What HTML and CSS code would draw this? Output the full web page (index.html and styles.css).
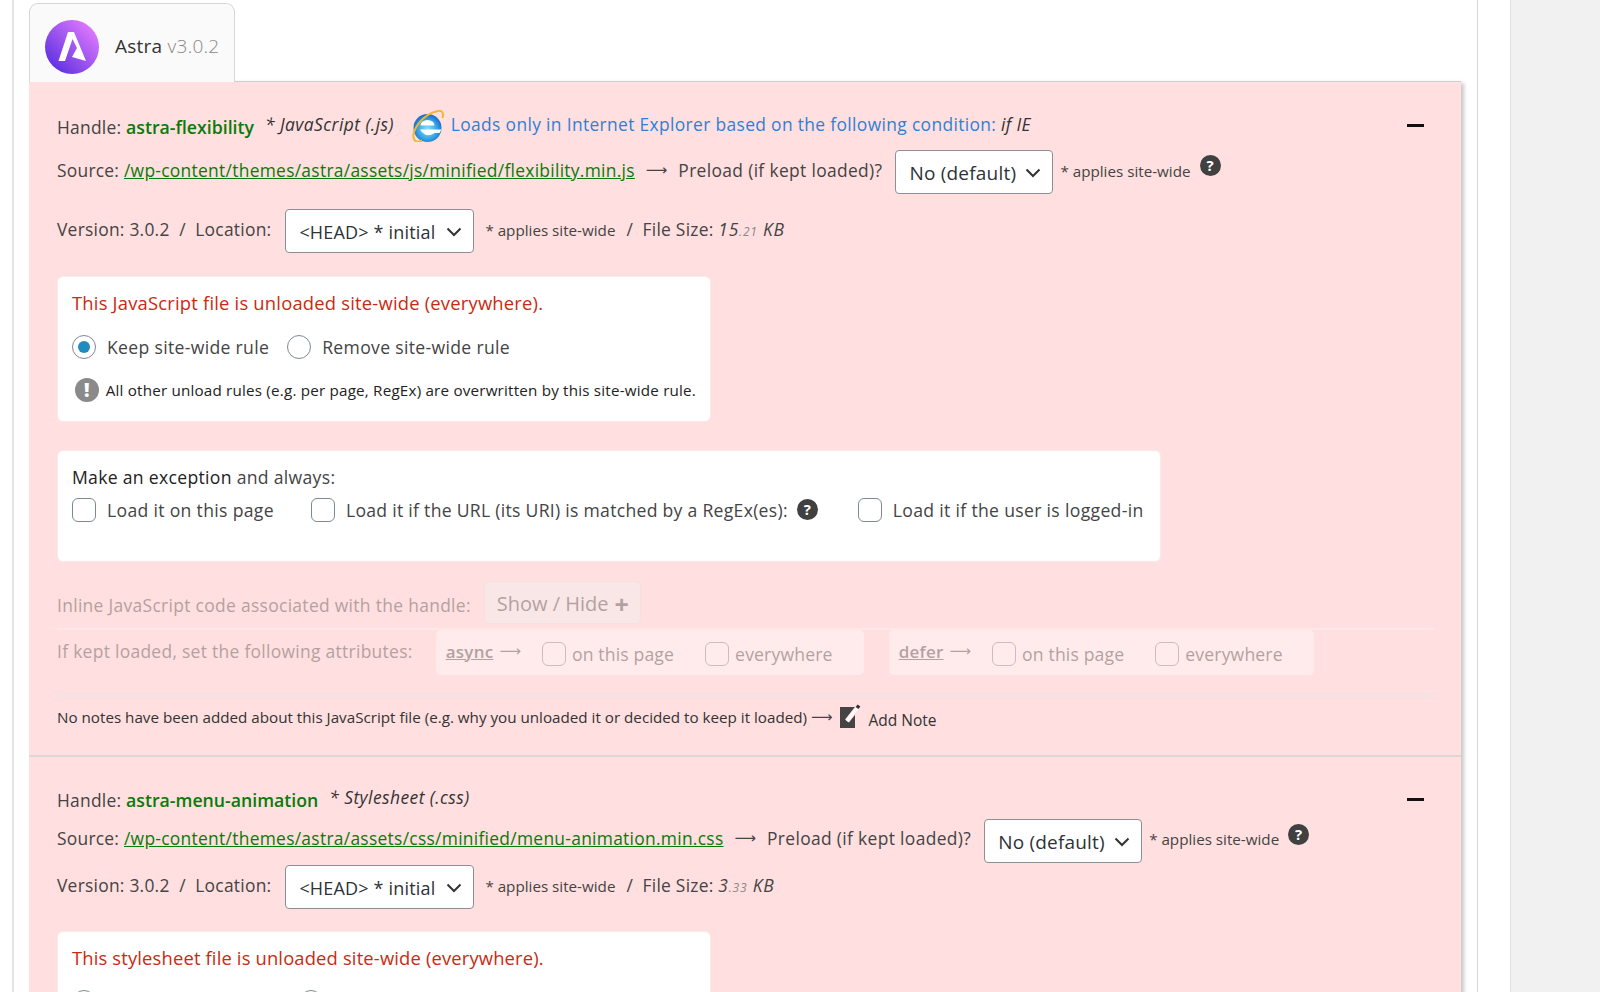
FILE: index.html
```html
<!DOCTYPE html>
<html lang="en">
<head>
  <meta charset="UTF-8">
  <meta name="viewport" content="width=device-width, initial-scale=1.0">
  <title>Asset CleanUp</title>
  <link rel="stylesheet" href="styles.css">
</head>
<body>
  <div class="page">
    <div class="panel">

      <!-- Theme tab -->
      <div class="tab">
        <svg class="logo" width="54" height="54" viewBox="0 0 54 54">
          <defs>
            <linearGradient id="astra-grad" x1="0.1" y1="0.9" x2="0.9" y2="0.1">
              <stop offset="0" stop-color="#5a2fe0"/>
              <stop offset="1" stop-color="#e37bff"/>
            </linearGradient>
          </defs>
          <circle cx="27" cy="27" r="27" fill="url(#astra-grad)"/>
          <path d="M23 12H29L41 41L27 37L32 28L27.5 19L20 41H13.5Z" fill="#fff"/>
        </svg>
        <span class="tab-name">Astra <span class="tab-version">v3.0.2</span></span>
      </div>

      <div class="assets">

        <!-- First asset -->
        <div class="asset">
          <div class="row row-handle">
            <span>Handle: <strong class="handle">astra-flexibility</strong></span>
            <em class="asset-type type-js">* JavaScript (.js)</em>
            <svg class="ie-icon" width="32" height="32" viewBox="0 0 32 32">
              <defs>
                <radialGradient id="ie-grad" cx="0.5" cy="0.55" r="0.55">
                  <stop offset="0" stop-color="#8fe0f8"/>
                  <stop offset="0.6" stop-color="#38a8e8"/>
                  <stop offset="1" stop-color="#1767c8"/>
                </radialGradient>
              </defs>
              <circle cx="15.5" cy="18" r="14" fill="url(#ie-grad)"/>
              <path d="M8.5 15.5a7 5.5 0 0 1 14 0Z" fill="#fff"/>
              <path d="M8 19.5H29.5L27.5 23H22.5Q15 28 9.5 21.5Z" fill="#fff"/>
              <path d="M2.5 30C-2 22 10 4 26 1C30 0 32 3 30.5 8M2.5 30C4 32 7 32 10 30.5" fill="none" stroke="#f3b52c" stroke-width="2"/>
            </svg>
            <span class="ie-note">Loads only in Internet Explorer based on the following condition: <em>if IE</em></span>
            <span class="minus"></span>
          </div>

          <div class="row row-source">
            <span class="lift-4">Source: <a class="src-link" href="#">/wp-content/themes/astra/assets/js/minified/flexibility.min.js</a></span>
            <span class="arrow lift-4">&#10230;</span>
            <span class="lift-4 preload-label">Preload (if kept loaded)?</span>
            <div class="select select-preload">No (default)
              <svg width="16" height="10" viewBox="0 0 16 10"><path d="M1.5 1.5L8 8L14.5 1.5" fill="none" stroke="#333" stroke-width="2"/></svg>
            </div>
            <span class="small lift-2">* applies site-wide</span>
            <span class="help">?</span>
          </div>

          <div class="row row-version">
            <span class="lift-4">Version: 3.0.2 &nbsp;/&nbsp; Location:</span>
            <div class="select select-location">&lt;HEAD&gt; * initial
              <svg width="16" height="10" viewBox="0 0 16 10"><path d="M1.5 1.5L8 8L14.5 1.5" fill="none" stroke="#333" stroke-width="2"/></svg>
            </div>
            <span class="small small-loc lift-2">* applies site-wide</span>
            <span class="file-size lift-4">/ &nbsp;File Size: <em>15<small>.21</small> KB</em></span>
          </div>

          <div class="card card-rule">
            <div class="unloaded">This JavaScript file is unloaded site-wide (everywhere).</div>
            <div class="choices">
              <label class="choice"><input type="radio" name="rule1" checked> Keep site-wide rule</label>
              <label class="choice"><input type="radio" name="rule1"> Remove site-wide rule</label>
            </div>
            <div class="warning"><span class="warn-icon">!</span> All other unload rules (e.g. per page, RegEx) are overwritten by this site-wide rule.</div>
          </div>

          <div class="card card-exception">
            <div class="exception-title"><strong>Make an exception</strong> and always:</div>
            <div class="exceptions">
              <label class="choice"><input type="checkbox"> Load it on this page</label>
              <label class="choice choice-regex"><input type="checkbox"> Load it if the URL (its URI) is matched by a RegEx(es):</label>
              <span class="help help-regex">?</span>
              <label class="choice choice-logged"><input type="checkbox"> Load it if the user is logged-in</label>
            </div>
          </div>

          <div class="disabled-wrap">
            <div class="row row-inline">
              <span class="inline-label">Inline JavaScript code associated with the handle:</span>
              <span class="show-hide">Show / Hide <b>+</b></span>
            </div>
            <div class="row row-attrs">
              <span class="attrs-label">If kept loaded, set the following attributes:</span>
              <div class="attr attr-async">
                <u>async</u> <span class="arrow arrow-attr">&#10230;</span>
                <label class="attr-opt"><input type="checkbox"> on this page</label>
                <label class="attr-opt"><input type="checkbox"> everywhere</label>
              </div>
              <div class="attr attr-defer">
                <u>defer</u> <span class="arrow arrow-attr">&#10230;</span>
                <label class="attr-opt"><input type="checkbox"> on this page</label>
                <label class="attr-opt"><input type="checkbox"> everywhere</label>
              </div>
            </div>
          </div>

          <div class="row row-notes">
            <span>No notes have been added about this JavaScript file (e.g. why you unloaded it or decided to keep it loaded)</span>
            <span class="arrow arrow-note">&#10230;</span>
            <svg class="note-icon" width="24" height="25" viewBox="0 0 24 25">
              <rect x="1" y="3" width="15" height="21" fill="#444"/>
              <path d="M8 17L19 3" stroke="#ffdfdf" stroke-width="5"/>
              <path d="M8 17L19 3" stroke="#fff" stroke-width="3"/>
              <path d="M18 4L20 1.5" stroke="#333" stroke-width="3.5"/>
            </svg>
            <span class="add-note">Add Note</span>
          </div>
        </div>

        <!-- Second asset -->
        <div class="asset asset-second">
          <div class="row row-handle-2">
            <span>Handle: <strong class="handle">astra-menu-animation</strong></span>
            <em class="asset-type type-css">* Stylesheet (.css)</em>
            <span class="minus"></span>
          </div>

          <div class="row row-source-2">
            <span class="lift-6">Source: <a class="src-link" href="#">/wp-content/themes/astra/assets/css/minified/menu-animation.min.css</a></span>
            <span class="arrow lift-6">&#10230;</span>
            <span class="lift-6 preload-label">Preload (if kept loaded)?</span>
            <div class="select select-preload">No (default)
              <svg width="16" height="10" viewBox="0 0 16 10"><path d="M1.5 1.5L8 8L14.5 1.5" fill="none" stroke="#333" stroke-width="2"/></svg>
            </div>
            <span class="small lift-4">* applies site-wide</span>
            <span class="help">?</span>
          </div>

          <div class="row row-version-2">
            <span class="lift-4">Version: 3.0.2 &nbsp;/&nbsp; Location:</span>
            <div class="select select-location">&lt;HEAD&gt; * initial
              <svg width="16" height="10" viewBox="0 0 16 10"><path d="M1.5 1.5L8 8L14.5 1.5" fill="none" stroke="#333" stroke-width="2"/></svg>
            </div>
            <span class="small small-loc lift-2">* applies site-wide</span>
            <span class="file-size lift-4">/ &nbsp;File Size: <em>3<small>.33</small> KB</em></span>
          </div>

          <div class="card card-rule">
            <div class="unloaded unloaded-css">This stylesheet file is unloaded site-wide (everywhere).</div>
            <div class="choices choices-peek">
              <input type="radio" name="rule2" checked>
              <input type="radio" name="rule2">
            </div>
          </div>
        </div>

      </div>
    </div>
    <div class="sidebar"></div>
  </div>
</body>
</html>
```

FILE: styles.css
```css
/* General Styles */
html, body {
  margin: 0;
  padding: 0;
  height: 100%;
  overflow: hidden;
}

body {
  font-family: 'Open Sans', 'Noto Sans', sans-serif;
  font-size: 17.4px;
  letter-spacing: 0.25px;
  color: #444;
  background: #fff;
}

.page {
  display: flex;
  height: 992px;
  overflow: hidden;
}

.panel {
  box-sizing: border-box;
  width: 1466px;
  margin-left: 12px;
  padding: 3px 16px 0 15px;
  border-left: 2px solid #e4e4e4;
  border-right: 1px solid #d8d8d8;
  background: #fff;
}

.sidebar {
  width: 90px;
  margin-left: 32px;
  border-left: 1px solid #dedede;
  background: #f1f1f1;
}

/* Tab */
.tab {
  box-sizing: border-box;
  display: flex;
  align-items: center;
  position: relative;
  z-index: 1;
  width: 206px;
  height: 79px;
  margin-bottom: -1px;
  padding: 8px 0 0 15px;
  background: #fafafa;
  border: 1px solid #d6d6d6;
  border-bottom: 0;
  border-radius: 9px 9px 0 0;
}

.tab-name {
  margin-left: 16px;
  margin-bottom: 2px;
  font-size: 19px;
  letter-spacing: 0.25px;
  color: #333;
}

.tab-version {
  color: #888;
  font-weight: 300;
}

/* Asset box */
.assets {
  border-top: 1px solid #cfcfcf;
  background: #ffdfdf;
  box-shadow: 3px 2px 4px #c8c8c8;
  height: 1000px;
}

.asset {
  padding: 27px 27px 0 28px;
}

.asset-second {
  padding-top: 25px;
  border-top: 2px solid #dcd6d6;
}

.row {
  display: flex;
  align-items: center;
  white-space: nowrap;
}

.lift-2 {
  margin-bottom: 2px;
}

.lift-4 {
  margin-bottom: 4px;
}

.lift-6 {
  margin-bottom: 6px;
}

.row-handle {
  height: 36px;
}

.row-source {
  height: 46px;
  margin-top: 4px;
}

.row-version {
  height: 48px;
  margin-top: 12px;
}

.row-handle-2 {
  height: 36px;
}

.row-handle-2 .minus {
  margin-bottom: 2px;
}

.row-source-2 {
  height: 46px;
}

.row-version-2 {
  height: 46px;
}

.handle {
  font-weight: 600;
  font-size: 17.7px;
  letter-spacing: 0;
  color: #0a7a0a;
}

.asset-type {
  margin-bottom: 6px;
  letter-spacing: 0.45px;
  color: #333;
}

.type-js {
  margin-left: 11px;
}

.type-css {
  margin-left: 11px;
}

.ie-icon {
  margin-left: 18px;
  margin-bottom: 2px;
}

.ie-note {
  margin-left: 7px;
  margin-bottom: 6px;
  letter-spacing: 0.35px;
  color: #2f7fd6;
}

.ie-note em {
  color: #333;
}

.minus {
  width: 17px;
  height: 3px;
  margin-left: auto;
  margin-right: 10px;
  margin-bottom: 4px;
  background: #111;
}

.src-link {
  letter-spacing: 0.29px;
  color: #0a7a0a;
  text-decoration: underline;
}

.preload-label {
  letter-spacing: 0.35px;
}

.arrow {
  margin-left: 11px;
  margin-right: 11px;
  font-family: 'DejaVu Sans', sans-serif;
  font-size: 15px;
  letter-spacing: 0;
  color: #444;
}

.select {
  box-sizing: border-box;
  display: flex;
  align-items: center;
  justify-content: space-between;
  height: 44px;
  padding: 1px 11px 0 13px;
  background: #fff;
  border: 1px solid #8c8f94;
  border-radius: 4px;
  font-size: 19px;
  letter-spacing: 0.2px;
  color: #2c3338;
}

.select svg {
  flex: none;
}

.select-preload {
  width: 158px;
  margin-left: 13px;
}

.select-location {
  width: 189px;
  margin-left: 14px;
  font-size: 18px;
  letter-spacing: 0.18px;
}

.small {
  margin-left: 7px;
  font-size: 15.2px;
  letter-spacing: 0;
}

.small-loc {
  margin-left: 11px;
}

.help {
  display: flex;
  align-items: center;
  justify-content: center;
  width: 21px;
  height: 21px;
  margin-left: 9px;
  margin-bottom: 14px;
  border-radius: 50%;
  background: #404040;
  color: #fff;
  font-size: 15px;
  font-weight: 700;
  letter-spacing: 0;
}

.file-size {
  margin-left: 11px;
}

.file-size em {
  letter-spacing: 0.8px;
}

.file-size small {
  font-size: 12px;
  color: #888;
}

/* Cards */
.card {
  box-sizing: border-box;
  background: #fff;
  border-radius: 6px;
  border: 1px solid #fbe9e9;
  padding: 0 14px;
}

.card-rule {
  width: 654px;
  height: 146px;
  margin-top: 21px;
}

.unloaded {
  margin-top: 13px;
  color: #c92a10;
  font-size: 18.4px;
  letter-spacing: 0.2px;
}

.unloaded-css {
  letter-spacing: 0.15px;
}

.choices {
  display: flex;
  margin-top: 20px;
  gap: 18px;
}

.choices-peek {
  gap: 192px;
}

.choice {
  display: flex;
  align-items: center;
  font-size: 17.6px;
  letter-spacing: 0.32px;
  color: #444;
}

input[type="radio"],
input[type="checkbox"] {
  box-sizing: border-box;
  appearance: none;
  width: 24px;
  height: 24px;
  margin: 0 11px 0 0;
  background: #fff;
  border: 1px solid #7e8993;
  flex: none;
}

input[type="checkbox"] {
  border-radius: 6px;
}

input[type="radio"] {
  display: flex;
  align-items: center;
  justify-content: center;
  border-radius: 50%;
}

input[type="radio"]:checked::before {
  content: "";
  width: 12px;
  height: 12px;
  border-radius: 50%;
  background: #1e8cbe;
}

.warning {
  display: flex;
  align-items: center;
  margin-top: 19px;
  margin-left: 3px;
  font-size: 15.2px;
  letter-spacing: 0.2px;
  white-space: nowrap;
  color: #222;
}

.warn-icon {
  display: flex;
  align-items: center;
  justify-content: center;
  width: 24px;
  height: 24px;
  margin-right: 7px;
  border-radius: 50%;
  background: #8a8a8a;
  color: #fff;
  font-size: 19px;
  font-weight: 800;
}

.card-exception {
  width: 1104px;
  height: 112px;
  margin-top: 28px;
}

.exception-title {
  margin-top: 14px;
  font-size: 17.6px;
  letter-spacing: 0.3px;
}

.exception-title strong {
  font-weight: 500;
  color: #222;
}

.exceptions {
  display: flex;
  align-items: center;
  margin-top: 9px;
  white-space: nowrap;
}

.choice-regex {
  margin-left: 37px;
  letter-spacing: 0.28px;
}

.help-regex {
  margin-bottom: 2px;
}

.choice-logged {
  margin-left: 40px;
}

/* Faded part */
.disabled-wrap {
  opacity: 0.4;
}

.row-inline {
  height: 46px;
  margin-top: 17px;
  padding-bottom: 3px;
  border-bottom: 2px solid #fbf4f4;
  width: 1377px;
  letter-spacing: 0.33px;
}

.inline-label {
  margin-top: 5px;
}

.show-hide {
  box-sizing: border-box;
  display: flex;
  align-items: center;
  width: 157px;
  height: 43px;
  margin-left: 13px;
  padding: 3px 0 0 12px;
  background: #f2f2f2;
  border: 1px solid #e2e2e2;
  border-radius: 5px;
  font-size: 20px;
  letter-spacing: 0;
}

.show-hide b {
  margin-left: 6px;
  font-size: 25px;
}

.row-attrs {
  height: 46px;
  margin-top: -1px;
}

.attrs-label {
  margin-bottom: 2px;
  letter-spacing: 0.31px;
}

.attr {
  box-sizing: border-box;
  display: flex;
  align-items: center;
  height: 45px;
  padding-left: 10px;
  background: #fff;
  border-radius: 5px;
}

.attr u {
  font-weight: 600;
  font-size: 17px;
  margin-bottom: 2px;
}

.attr-async {
  width: 428px;
  margin-left: 23px;
}

.attr-defer {
  width: 425px;
  margin-left: 25px;
}

.arrow-attr {
  margin: 0 21px 2px 6px;
}

.attr-opt {
  display: flex;
  align-items: center;
  margin-top: 4px;
  margin-right: 31px;
  font-size: 17.6px;
  letter-spacing: 0.15px;
}

.attr-opt input {
  margin-right: 6px;
}

/* Notes */
.row-notes {
  box-sizing: border-box;
  height: 60px;
  width: 1377px;
  margin-top: 20px;
  padding-bottom: 18px;
  border-top: 2px solid #efe4e4;
  font-size: 15.2px;
  letter-spacing: 0;
  color: #333;
}

.arrow-note {
  margin: 0 6px 0 4px;
}

.note-icon {
  margin-bottom: 2px;
}

.add-note {
  margin-left: 6px;
  margin-top: 6px;
  font-size: 15.5px;
}
```
